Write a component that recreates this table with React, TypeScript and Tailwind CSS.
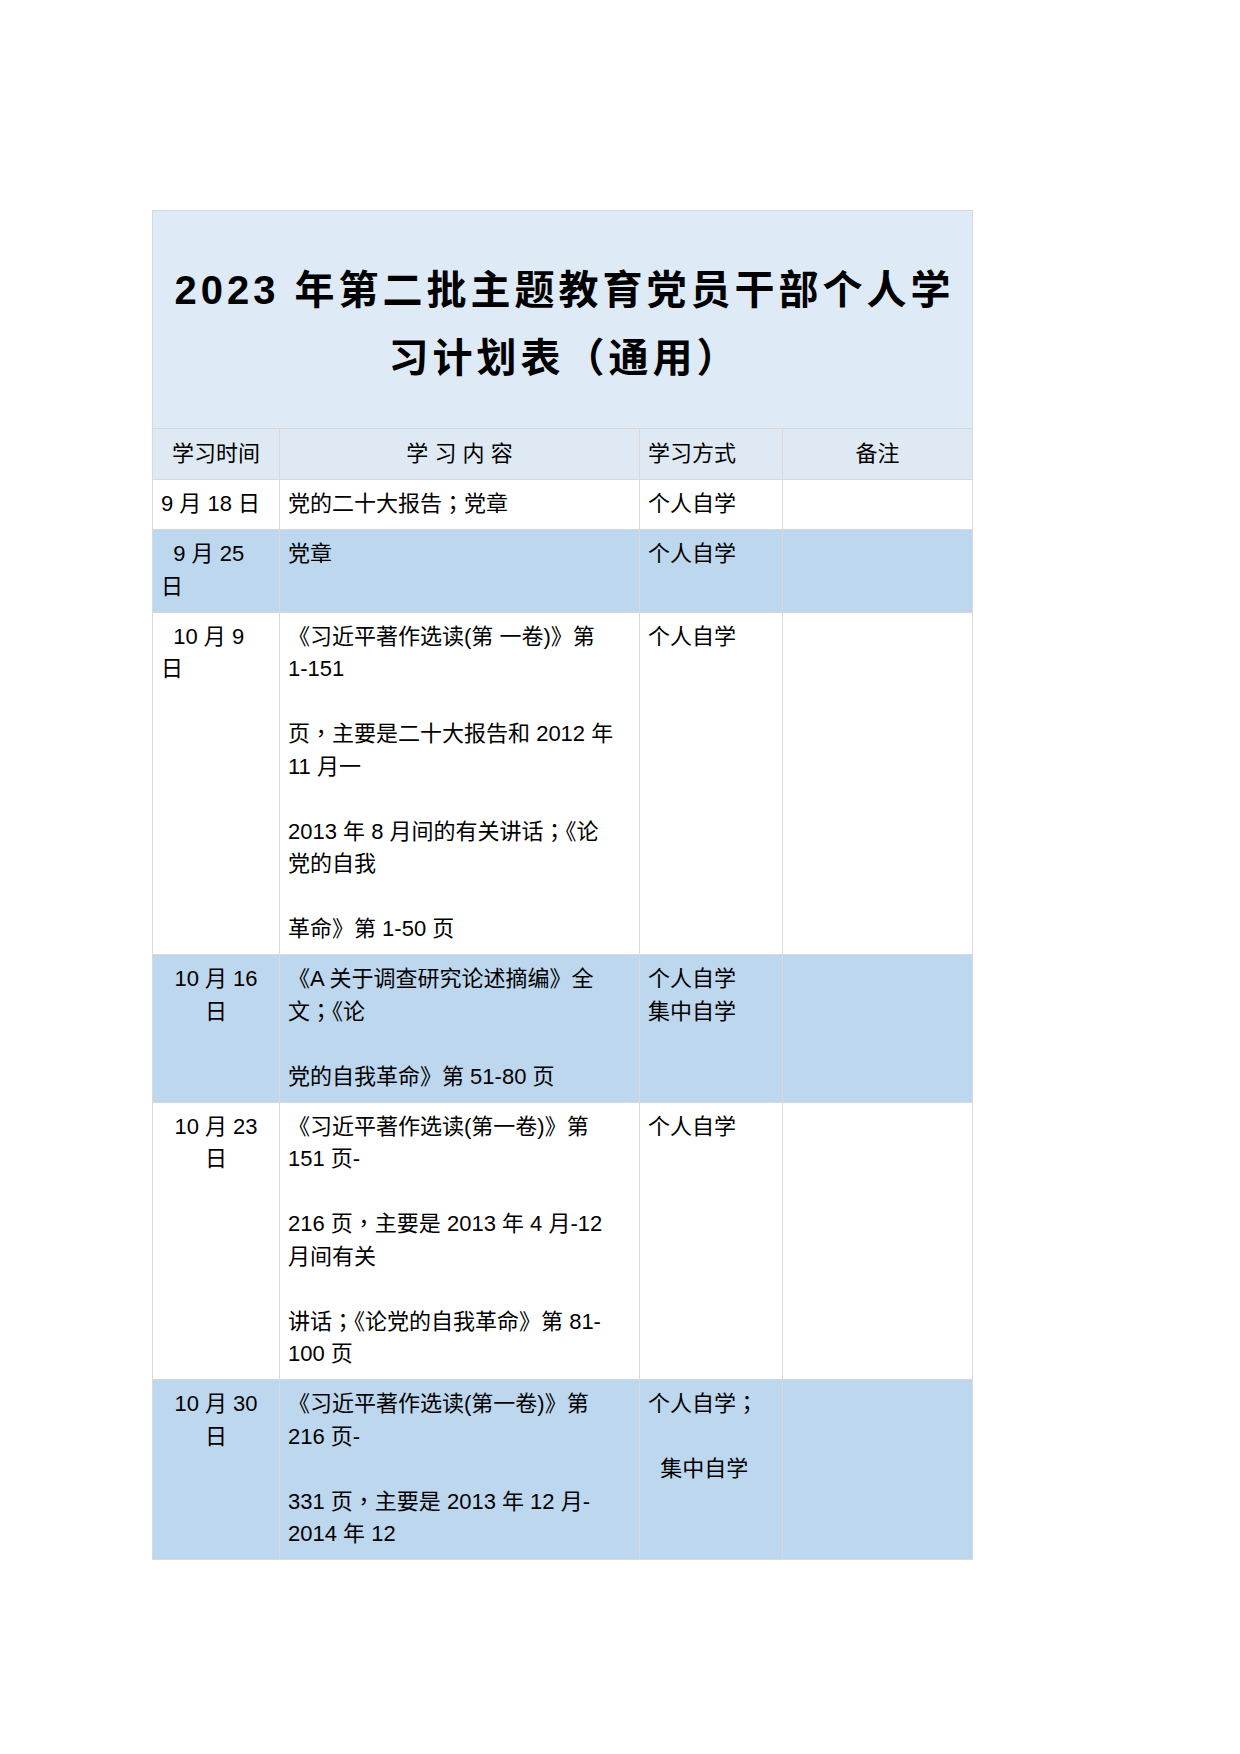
import React from "react";

type Row = {
  bg: string;
  date: string[];
  dateCenter?: boolean;
  content: string[];
  mode: string[];
};

const rows: Row[] = [
  { bg: "bg-white", date: ["9 月 18 日"], content: ["党的二十大报告；党章"], mode: ["个人自学"] },
  { bg: "bg-[#bdd7ee]", date: ["  9 月 25", "日"], content: ["党章"], mode: ["个人自学"] },
  {
    bg: "bg-white",
    date: ["  10 月 9", "日"],
    content: [
      "《习近平著作选读(第 一卷)》第",
      "1-151",
      "",
      "页，主要是二十大报告和 2012 年",
      "11 月一",
      "",
      "2013 年 8 月间的有关讲话；《论",
      "党的自我",
      "",
      "革命》第 1-50 页",
    ],
    mode: ["个人自学"],
  },
  {
    bg: "bg-[#bdd7ee]",
    date: ["10 月 16", "日"],
    dateCenter: true,
    content: ["《A 关于调查研究论述摘编》全", "文；《论", "", "党的自我革命》第 51-80 页"],
    mode: ["个人自学", "集中自学"],
  },
  {
    bg: "bg-white",
    date: ["10 月 23", "日"],
    dateCenter: true,
    content: [
      "《习近平著作选读(第一卷)》第",
      "151 页-",
      "",
      "216 页，主要是 2013 年 4 月-12",
      "月间有关",
      "",
      "讲话；《论党的自我革命》第 81-",
      "100 页",
    ],
    mode: ["个人自学"],
  },
  {
    bg: "bg-[#bdd7ee]",
    date: ["10 月 30", "日"],
    dateCenter: true,
    content: ["《习近平著作选读(第一卷)》第", "216 页-", "", "331 页，主要是 2013 年 12 月-", "2014 年 12"],
    mode: ["个人自学；", "", "  集中自学"],
  },
];

function Text({ s }: { s: string }) {
  const parts = s.split(/([；，])/);
  return (
    <>
      {parts.map((p, i) =>
        p === "；" || p === "，" ? (
          <span key={i} className="font-['Noto_Sans_CJK_TC',sans-serif] leading-none">
            {p}
          </span>
        ) : (
          <React.Fragment key={i}>{p}</React.Fragment>
        )
      )}
    </>
  );
}

function Lines({ lines }: { lines: string[] }) {
  return (
    <>
      {lines.map((l, i) => (
        <div key={i} className="whitespace-pre leading-[32.5px] h-[32.5px]">
          {l === "" ? "\u00a0" : <Text s={l} />}
        </div>
      ))}
    </>
  );
}

export default function App() {
  const font = "font-['Liberation_Sans','Noto_Sans_CJK_SC',sans-serif]";
  const cell = "border border-[#d9d9d9] align-top px-[8px] pt-[8px] pb-[8.5px]";
  return (
    <div className={`min-h-[1754px] w-[1240px] bg-white pt-[210px] pl-[152px] text-black ${font}`}>
      <table className="table-fixed border-collapse w-[820px] text-[22px]">
        <colgroup>
          <col className="w-[127px]" />
          <col className="w-[360px]" />
          <col className="w-[143px]" />
          <col className="w-[190px]" />
        </colgroup>
        <tbody>
          <tr className="bg-[#deeaf5]">
            <td colSpan={4} className="border border-[#d9d9d9] h-[218px] text-center align-middle px-0">
              <div className="font-bold text-[40px] leading-[68px] pt-[8px] pl-[4px] tracking-[4px] whitespace-nowrap">
                <div>2023 年第二批主题教育党员干部个人学</div>
                <div>习计划表（通用）</div>
              </div>
            </td>
          </tr>
          <tr className="bg-[#dfe9f4]">
            <td className="border border-[#d9d9d9] text-center px-[8px] py-[9px] leading-[32px]">学习时间</td>
            <td className="border border-[#d9d9d9] text-center px-[8px] py-[9px] leading-[32px] whitespace-pre">学 习 内 容</td>
            <td className="border border-[#d9d9d9] text-left px-[8px] py-[9px] leading-[32px]">学习方式</td>
            <td className="border border-[#d9d9d9] text-center px-[8px] py-[9px] leading-[32px]">备注</td>
          </tr>
          {rows.map((r, i) => (
            <tr key={i} className={r.bg}>
              <td className={`${cell} ${r.dateCenter ? "text-center" : "text-left"}`}>
                <Lines lines={r.date} />
              </td>
              <td className={cell}>
                <Lines lines={r.content} />
              </td>
              <td className={cell}>
                <Lines lines={r.mode} />
              </td>
              <td className={cell}></td>
            </tr>
          ))}
        </tbody>
      </table>
    </div>
  );
}
